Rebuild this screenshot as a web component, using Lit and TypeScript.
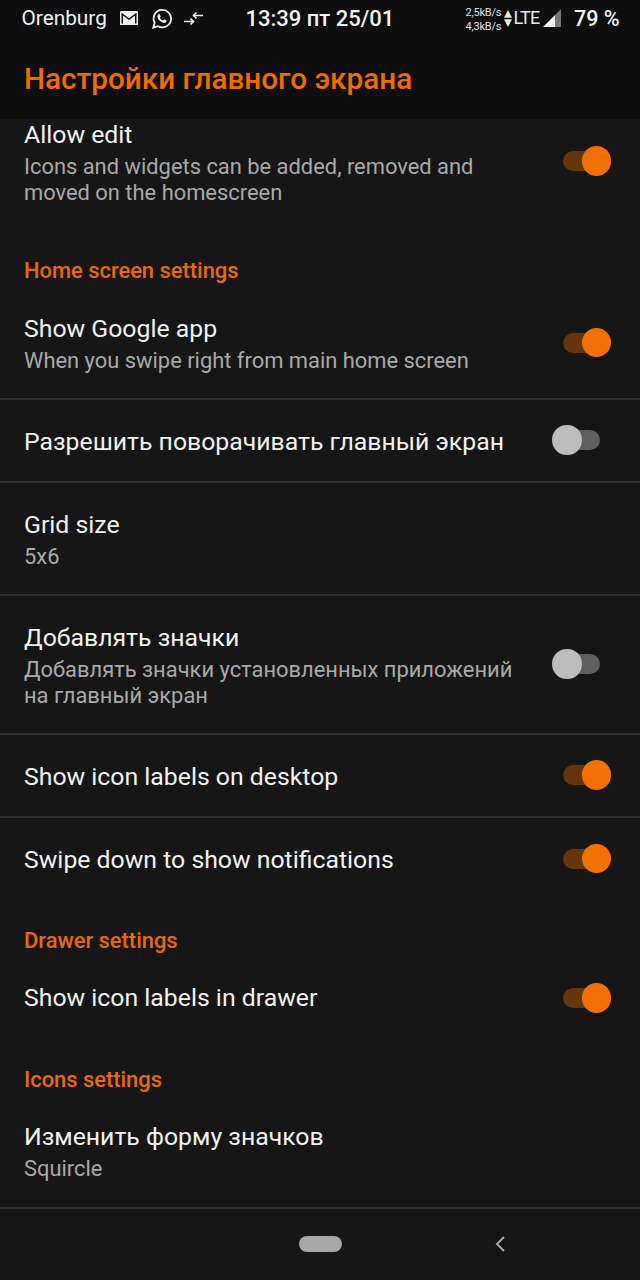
import { LitElement, html, css } from "lit";
import { customElement, property } from "lit/decorators.js";

@customElement("sw-toggle")
class SwToggle extends LitElement {
  @property({ type: Boolean }) on = false;
  static styles = css`
    :host { display: block; width: 59px; height: 30px; position: relative; flex: none; }
    .track { position: absolute; left: 11px; width: 37px; top: 5px; height: 20px; border-radius: 10px; background: #5f5f5f; }
    .knob { position: absolute; top: 0; left: 0; width: 29.500px; height: 29.500px; border-radius: 50%; background: #bdbdbd; }
    .on .track { background: #663509; }
    .on .knob { left: 29.500px; background: #f17105; }
  `;
  render() {
    return html`<div class=${this.on ? "on" : ""}><div class="track"></div><div class="knob"></div></div>`;
  }
}

@customElement("app-root")
class AppRoot extends LitElement {
  static styles = css`
    :host { display: flex; flex-direction: column; width: 640px; height: 1280px; overflow: hidden; background: #161616; font-family: Roboto, "Noto Sans", sans-serif; color: #f0f0f0; }
    .status { flex: none; height: 36px; background: #0e0e0e; display: flex; align-items: center; padding: 0 0 0 21.500px; color: #f2f2f2; box-sizing: border-box; }
    .city { font-size: 20.800px; width: 84px; white-space: nowrap; }
    .ic { display: block; flex: none; }
    .mail { margin-left: 14px; }
    .wa { margin-left: 13px; }
    .arr { margin-left: 11px; }
    .clock { font-size: 22px; font-weight: 500; margin-left: 43px; width: 147px; white-space: nowrap; }
    .speed { font-size: 11px; line-height: 14px; margin: 4px 0 0 73px; width: 34px; color: #e0e0e0; white-space: nowrap; letter-spacing: -0.2px; }
    .tri { margin-left: 4px; }
    .lte { font-size: 18px; margin: 0 0 2px 2px; width: 24px; color: #e8e8e8; letter-spacing: -0.8px; white-space: nowrap; }
    .sig { margin-left: 5px; }
    .batt { font-size: 21.500px; font-weight: 500; margin-left: 13.500px; white-space: nowrap; }
    .appbar { flex: none; height: 83px; box-sizing: border-box; background: #0e0e0e; padding: 24px 24px 0; font-size: 29.700px; line-height: 38px; font-weight: 500; color: #ef6c00; }
    .scroll { flex: none; height: 1090px; overflow: hidden; }
    .list { margin-top: -27.500px; }
    .row { display: flex; align-items: center; padding: 0 29px 0 24px; box-sizing: border-box; }
    .div { border-bottom: 1px solid #303030; box-shadow: 0 1px 0 #303030; }
    .h83 { height: 83px; }
    .h112 { height: 112px; }
    .h113 { height: 113px; }
    .h139 { height: 139px; }
    .txt { flex: 1; min-width: 0; padding: 4px 24px 0 0; }
    .p0 .txt { padding-top: 0; }
    .p1 .txt { padding-top: 1px; }
    .p2 .txt { padding-top: 2px; }
    .p3 .txt { padding-top: 3px; }
    .t { font-size: 24.800px; line-height: 30px; color: #f2f2f2; }
    .s { font-size: 21.900px; line-height: 26px; color: #a9a9a9; margin-top: 4px; }
    .sec { height: 56.500px; display: flex; align-items: flex-end; padding: 0 24px 3px; box-sizing: border-box; font-size: 21.900px; line-height: 26px; font-weight: 500; color: #e96b08; }
    .nav { flex: 1; display: flex; align-items: center; }
    .pill { width: 43px; height: 16px; border-radius: 8px; background: #a8a8a8; margin-left: 299px; margin-top: -2px; }
    .back { margin-left: 152px; margin-top: -2px; }
  `;

  row(cls: string, t: string, s: string | null, on: boolean | null) {
    return html`<div class="row ${cls}">
      <div class="txt"><div class="t">${t}</div>${s ? html`<div class="s">${s}</div>` : ""}</div>
      ${on === null ? "" : html`<sw-toggle ?on=${on}></sw-toggle>`}
    </div>`;
  }

  render() {
    return html`
      <div class="status">
        <span class="city">Orenburg</span>
        <svg class="ic mail" width="18" height="14" viewBox="0 0 18 14">
          <path fill="#f2f2f2" d="M0 1 1 0h16l1 1v13H0z"/>
          <path fill="#0e0e0e" d="M3 12.500V4.500l6 4.500 6-4.500v8h1.500V1.800L9 7.200 1.500 1.800v10.700z"/>
        </svg>
        <svg class="ic wa" width="22" height="21" viewBox="0 0 24 24">
          <path fill="none" stroke="#f2f2f2" stroke-width="2" d="M2 22.500l1.600-5.600A10 10 0 1 1 7.400 20.800z"/>
          <path fill="#f2f2f2" d="M8.600 6.800c.5 0 .8 0 1 .6l.8 1.900c.1.300 0 .6-.2.900l-.7.900c.8 1.500 2 2.600 3.600 3.300l1-1.100c.2-.3.5-.3.8-.2l1.900.9c.4.200.5.400.4.800-.1 1.500-1.500 2.300-2.900 2.200-3.600-.4-6.900-3.500-7.500-6.900-.2-1.300.6-2.700 1.800-3.300z"/>
        </svg>
        <svg class="ic arr" width="19" height="15" viewBox="0 0 19 15">
          <path fill="none" stroke="#f2f2f2" stroke-width="1.700" d="M0 10.500h9.500M6.500 7.500l3 3-3 3M19 4.500H9.500M12.500 1.500l-3 3 3 3"/>
        </svg>
        <span class="clock">13:39 пт 25/01</span>
        <div class="speed"><div>2,5kB/s</div><div>4,3kB/s</div></div>
        <svg class="ic tri" width="8" height="17" viewBox="0 0 8 17">
          <path fill="#e8e8e8" d="M4 0l4 7.800H0zM0 9.200h8L4 17z"/>
        </svg>
        <span class="lte">LTE</span>
        <svg class="ic sig" width="18" height="18" viewBox="0 0 18 18">
          <path fill="#f2f2f2" d="M0 18 12 6v12z"/><path fill="#777" d="M12 6l6-6v18h-6z"/>
        </svg>
        <span class="batt">79 %</span>
      </div>
      <div class="appbar">Настройки главного экрана</div>
      <div class="scroll"><div class="list">
        ${this.row("h139", "Allow edit", "Icons and widgets can be added, removed and moved on the homescreen", true)}
        <div class="sec">Home screen settings</div>
        ${this.row("h112 div p2", "Show Google app", "When you swipe right from main home screen", true)}
        ${this.row("h83 div", "Разрешить поворачивать главный экран", null, false)}
        ${this.row("h113 div", "Grid size", "5x6", null)}
        ${this.row("h139 div", "Добавлять значки", "Добавлять значки установленных приложений на главный экран", false)}
        ${this.row("h83 div", "Show icon labels on desktop", null, true)}
        ${this.row("h83 p3", "Swipe down to show notifications", null, true)}
        <div class="sec">Drawer settings</div>
        ${this.row("h83 p0", "Show icon labels in drawer", null, true)}
        <div class="sec">Icons settings</div>
        ${this.row("h112 div p0", "Изменить форму значков", "Squircle", null)}
      </div></div>
      <div class="nav">
        <div class="pill"></div>
        <svg class="ic back" width="12" height="16" viewBox="0 0 12 16"><path fill="none" stroke="#a8a8a8" stroke-width="2" d="M10 1 3 8l7 7"/></svg>
      </div>
    `;
  }
}
